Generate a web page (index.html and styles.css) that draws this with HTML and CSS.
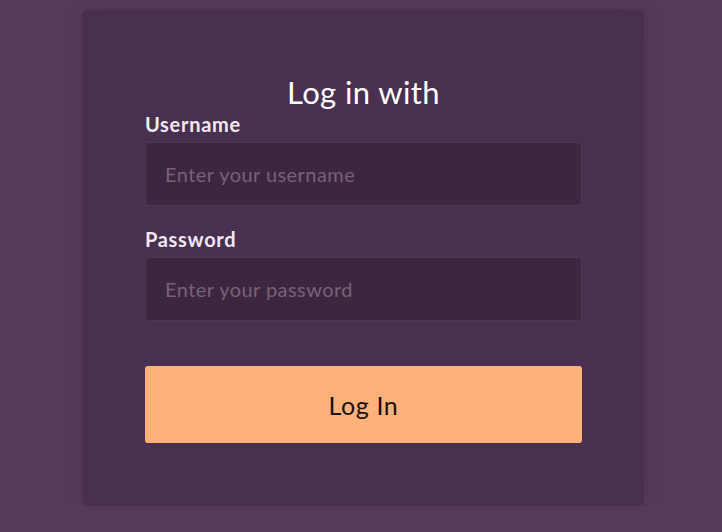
FILE: index.html
```html
<!DOCTYPE html>
<html>
<head>
<meta charset="utf-8">
<link rel="stylesheet" href="styles.css">
</head>
<body>
<main class="page">
  <form class="card">
    <h1 class="title">Log in with</h1>
    <label class="label" for="u">Username</label>
    <input class="field" id="u" type="text" placeholder="Enter your username">
    <label class="label label-gap" for="p">Password</label>
    <input class="field" id="p" type="password" placeholder="Enter your password">
    <button class="btn" type="button">Log In</button>
  </form>
</main>
</body>
</html>
```

FILE: styles.css
```css
html, body {
  margin: 0;
  padding: 0;
  background: #57395b;
  font-family: Lato, "Noto Sans", sans-serif;
}
.page {
  display: flex;
  justify-content: center;
  padding: 10px 0 0 4px;
}
.card {
  width: 562px;
  box-sizing: border-box;
  padding: 62px 62px 63px 63px;
  background: #4a3050;
  border-radius: 5px;
  box-shadow: 0 0 24px rgba(0,0,0,0.08);
  display: flex;
  flex-direction: column;
}
.title {
  margin: 0;
  text-align: center;
  font-weight: 400;
  font-size: 31px;
  letter-spacing: 0.4px;
  line-height: 40px;
  color: #ffffff;
}
.label {
  font-weight: 700;
  font-size: 20px;
  letter-spacing: 0.7px;
  line-height: 24px;
  color: #f1e9f2;
  margin-bottom: 6px;
}
.label-gap {
  margin-top: 21px;
}
.field {
  height: 64px;
  box-sizing: border-box;
  background: #3d2640;
  border: 1px solid #4f3752;
  border-radius: 3px;
  padding: 0 19px;
  font-family: inherit;
  font-size: 20px;
  letter-spacing: 0.45px;
  color: #fff;
  outline: none;
}
.field::placeholder {
  color: #77627a;
}
.btn {
  margin-top: 45px;
  height: 77px;
  background: #ffb17a;
  border: none;
  border-radius: 3px;
  font-family: inherit;
  font-size: 25px;
  letter-spacing: 0.6px;
  color: #1c1012;
  cursor: pointer;
}
```
